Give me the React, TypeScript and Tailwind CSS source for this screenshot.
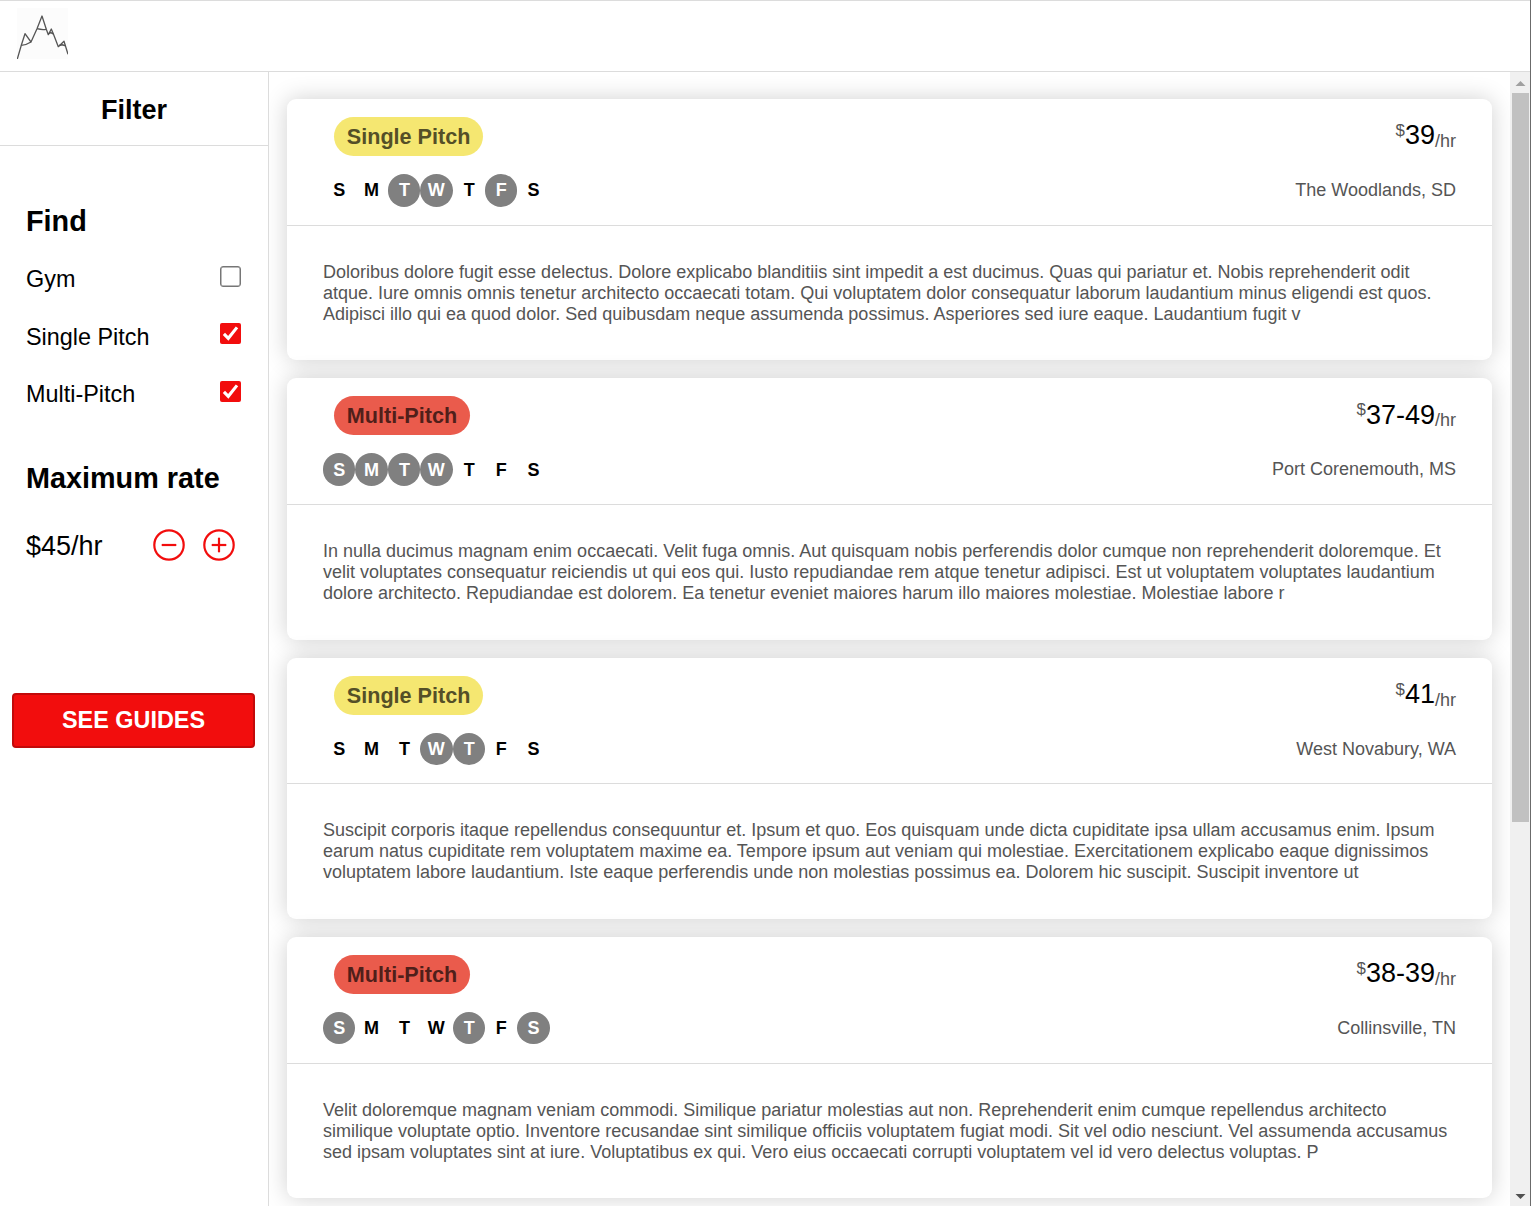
import React, { useState } from "react";

type Kind = "Single Pitch" | "Multi-Pitch";

interface Guide {
  kind: Kind;
  days: number[];
  price: string;
  place: string;
  lines: string[];
}

const DAY_LETTERS = ["S", "M", "T", "W", "T", "F", "S"];

const GUIDES: Guide[] = [
  {
    kind: "Single Pitch",
    days: [2, 3, 5],
    price: "39",
    place: "The Woodlands, SD",
    lines: [
      "Doloribus dolore fugit esse delectus. Dolore explicabo blanditiis sint impedit a est ducimus. Quas qui pariatur et. Nobis reprehenderit odit",
      "atque. Iure omnis omnis tenetur architecto occaecati totam. Qui voluptatem dolor consequatur laborum laudantium minus eligendi est quos.",
      "Adipisci illo qui ea quod dolor. Sed quibusdam neque assumenda possimus. Asperiores sed iure eaque. Laudantium fugit v",
    ],
  },
  {
    kind: "Multi-Pitch",
    days: [0, 1, 2, 3],
    price: "37-49",
    place: "Port Corenemouth, MS",
    lines: [
      "In nulla ducimus magnam enim occaecati. Velit fuga omnis. Aut quisquam nobis perferendis dolor cumque non reprehenderit doloremque. Et",
      "velit voluptates consequatur reiciendis ut qui eos qui. Iusto repudiandae rem atque tenetur adipisci. Est ut voluptatem voluptates laudantium",
      "dolore architecto. Repudiandae est dolorem. Ea tenetur eveniet maiores harum illo maiores molestiae. Molestiae labore r",
    ],
  },
  {
    kind: "Single Pitch",
    days: [3, 4],
    price: "41",
    place: "West Novabury, WA",
    lines: [
      "Suscipit corporis itaque repellendus consequuntur et. Ipsum et quo. Eos quisquam unde dicta cupiditate ipsa ullam accusamus enim. Ipsum",
      "earum natus cupiditate rem voluptatem maxime ea. Tempore ipsum aut veniam qui molestiae. Exercitationem explicabo eaque dignissimos",
      "voluptatem labore laudantium. Iste eaque perferendis unde non molestias possimus ea. Dolorem hic suscipit. Suscipit inventore ut",
    ],
  },
  {
    kind: "Multi-Pitch",
    days: [0, 4, 6],
    price: "38-39",
    place: "Collinsville, TN",
    lines: [
      "Velit doloremque magnam veniam commodi. Similique pariatur molestias aut non. Reprehenderit enim cumque repellendus architecto",
      "similique voluptate optio. Inventore recusandae sint similique officiis voluptatem fugiat modi. Sit vel odio nesciunt. Vel assumenda accusamus",
      "sed ipsam voluptates sint at iure. Voluptatibus ex qui. Vero eius occaecati corrupti voluptatem vel id vero delectus voluptas. P",
    ],
  },
];

function Logo() {
  return (
    <svg className="h-[51px] w-[51px] bg-[#fcfcfc]" viewBox="0 0 51 51" fill="none" stroke="#555" strokeWidth="1.3" strokeLinejoin="round">
      <path d="M0.3 51 L4.3 37.3 L8 25.7 L14 34 L20 20.7 L25 8 L29.3 21.3 L31.3 26.7 L34.3 21 L36.3 25.7 L41.3 38.7 L47 33.3 L51 46.3" />
      <path d="M4.3 37.3 Q9 37.2 14 34" />
      <path d="M20 20.7 Q25 22 29.3 21.3" />
      <path d="M32 25.4 L33.8 24.6 L36.3 25.9" strokeWidth="1.6" />
      <path d="M42.5 37.4 L45 36.8 L48.8 37.7" strokeWidth="1.6" />
    </svg>
  );
}

function Check({ on, onClick }: { on: boolean; onClick: () => void }) {
  return (
    <button
      onClick={onClick}
      className={
        on
          ? "mr-px mb-[3.8px] flex size-[21px] items-center justify-center rounded-[2px] bg-[#f20d0d]"
          : "mr-px mb-[3.8px] size-[21px] rounded-[3px] border border-[#767676] bg-white shadow-[inset_0_0_0_0.5px_#767676]"
      }
    >
      {on && (
        <svg className="size-[21px]" viewBox="0 0 21 21" fill="none" stroke="white" strokeWidth="3.1">
          <path d="M3.9 10.8 L8.3 15.3 L17 4.4" />
        </svg>
      )}
    </button>
  );
}

function RateIcon({ plus }: { plus?: boolean }) {
  return (
    <svg className="size-8" viewBox="0 0 32 32" fill="none" stroke="#f20d0d" strokeWidth="2.2">
      <circle cx="16" cy="16" r="14.7" />
      <path d="M8.7 16 H23.3" />
      {plus && <path d="M16 8.7 V23.3" />}
    </svg>
  );
}

function Card({ guide }: { guide: Guide }) {
  return (
    <article className="rounded-[9px] bg-white shadow-[0_0_23px_rgba(0,0,0,0.19)]">
      <div className="flex justify-between border-b border-[#dcdcdc] px-9 pt-[18px] pb-[18.2px]">
        <div className="flex flex-col items-start gap-[18.2px]">
          <span
            className={
              guide.kind === "Single Pitch"
                ? "ml-[10.8px] flex h-[38.8px] items-center rounded-full bg-[#f5e771] pr-[12.6px] pl-[13px] text-[21.6px] font-bold text-[#544f27]"
                : "ml-[10.8px] flex h-[38.8px] items-center rounded-full bg-[#ea5b4c] pr-[12.6px] pl-[13px] text-[21.6px] font-bold text-[#501f1a]"
            }
          >
            {guide.kind}
          </span>
          <div className="flex">
            {DAY_LETTERS.map((d, i) => (
              <span
                key={i}
                className={
                  guide.days.includes(i)
                    ? "flex size-[32.4px] items-center justify-center rounded-full bg-[#808080] pt-[0.8px] font-bold text-white"
                    : "flex size-[32.4px] items-center justify-center pt-[0.8px] font-bold"
                }
              >
                <span className={d === "T" ? "pl-px" : ""}>{d}</span>
              </span>
            ))}
          </div>
        </div>
        <div className="flex flex-col items-end justify-between text-[#555]">
          <div className="flex h-[37.6px] items-center">
            <span className="mb-[11px] text-[16.8px]">$</span>
            <span className="text-[27px] text-black">{guide.price}</span>
            <span className="mt-[11px]">/hr</span>
          </div>
          <div className="flex h-[32.4px] items-center pt-[0.6px]">{guide.place}</div>
        </div>
      </div>
      <div className="px-9 pt-[36px] pb-[35.78px] leading-[21px] whitespace-nowrap text-[#555]">
        {guide.lines.map((l) => (
          <p key={l}>{l}</p>
        ))}
      </div>
    </article>
  );
}

export default function App() {
  const [rate, setRate] = useState(45);
  const [kinds, setKinds] = useState<Record<string, boolean>>({
    Gym: false,
    "Single Pitch": true,
    "Multi-Pitch": true,
  });

  return (
    <div className="flex h-[1206px] w-[1531px] flex-col overflow-hidden border-r border-[#6b6b6b] bg-white font-['Liberation_Sans',Arial,sans-serif] text-[18px] leading-[21px] text-black">
      <header className="flex h-[72px] shrink-0 items-start border-y border-[#dcdcdc] pt-[7px] pl-[17px]">
        <Logo />
      </header>
      <div className="flex min-h-0 flex-1">
        <aside className="z-10 flex w-[269px] shrink-0 flex-col border-r border-[#dcdcdc] bg-white">
          <h1 className="flex h-[74px] items-center justify-center border-b border-[#dcdcdc] pt-[3px] text-[27px] font-bold">Filter</h1>
          <section className="px-[26px] pt-[58px]">
            <h2 className="text-[28.8px] leading-[34px] font-bold">Find</h2>
            <div className="mt-[11.4px]">
              {Object.keys(kinds).map((k) => (
                <div key={k} className="flex h-[57.6px] items-center justify-between text-[23.4px]">
                  <span className="pt-[3px]">{k}</span>
                  <Check on={kinds[k]} onClick={() => setKinds({ ...kinds, [k]: !kinds[k] })} />
                </div>
              ))}
            </div>
          </section>
          <section className="px-[26px] pt-[38.6px]">
            <h2 className="text-[28.8px] leading-[34px] font-bold">Maximum rate</h2>
            <div className="mt-[34px] flex h-8 items-center">
              <span className="w-[127px] pt-[3px] text-[27px]">${rate}/hr</span>
              <button onClick={() => setRate(rate - 1)}>
                <RateIcon />
              </button>
              <button className="ml-[17.5px]" onClick={() => setRate(rate + 1)}>
                <RateIcon plus />
              </button>
            </div>
          </section>
          <button className="mx-[12px] mt-[132px] flex h-[55px] w-[243px] items-center justify-center rounded-[4px] border-2 border-[#c20a0a] bg-[#f20d0d] text-[23.4px] font-bold text-white">
            SEE GUIDES
          </button>
        </aside>
        <main className="flex min-w-0 flex-1 flex-col gap-[18px] overflow-hidden px-[18px] pt-[27.14px]">
          {GUIDES.map((g) => (
            <Card key={g.place} guide={g} />
          ))}
        </main>
        <div className="z-10 flex w-[20px] shrink-0 flex-col items-center bg-[#f0f0f0]">
          <svg className="h-[21px] w-[20px] shrink-0" viewBox="0 0 20 21">
            <path d="M5.5 14 L10.5 9 L15.5 14 Z" fill="#a0a0a0" />
          </svg>
          <div className="ml-px h-[729px] w-[17px] shrink-0 bg-[#c1c1c1]" />
          <svg className="mt-auto h-[20px] w-[20px] shrink-0" viewBox="0 0 20 20">
            <path d="M5.5 8 L15.5 8 L10.5 13 Z" fill="#505050" />
          </svg>
        </div>
      </div>
    </div>
  );
}
